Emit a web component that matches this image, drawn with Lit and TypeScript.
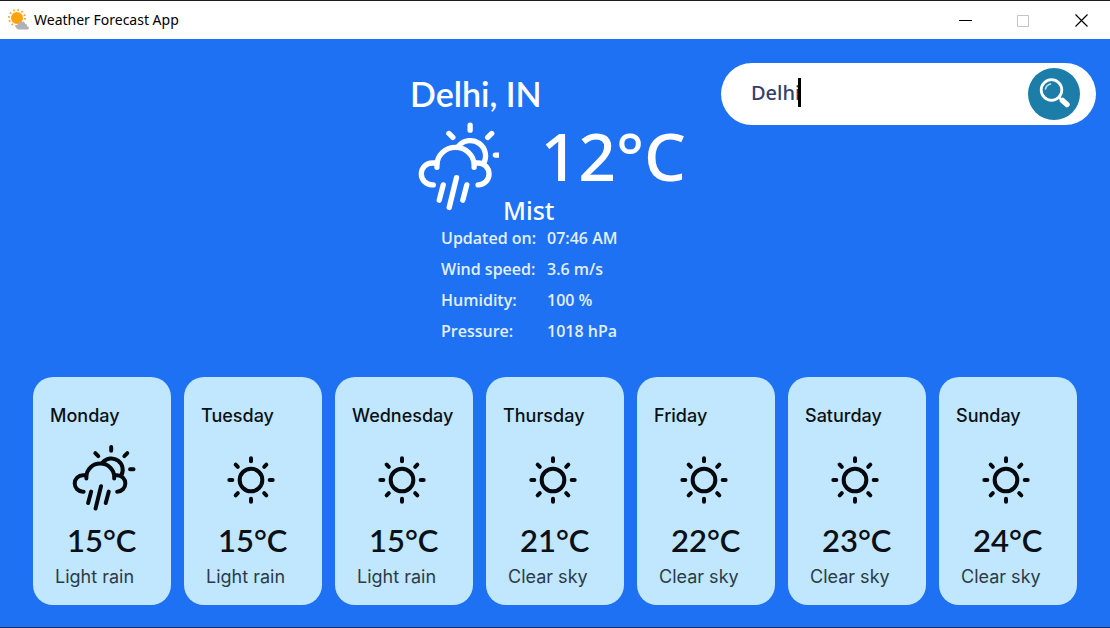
import { LitElement, html, css, svg } from "lit";
import { customElement, property } from "lit/decorators.js";

type Sky = "rain" | "clear";

interface Day {
  name: string;
  sky: Sky;
  temp: number;
  text: string;
}

const DAYS: Day[] = [
  { name: "Monday", sky: "rain", temp: 15, text: "Light rain" },
  { name: "Tuesday", sky: "clear", temp: 15, text: "Light rain" },
  { name: "Wednesday", sky: "clear", temp: 15, text: "Light rain" },
  { name: "Thursday", sky: "clear", temp: 21, text: "Clear sky" },
  { name: "Friday", sky: "clear", temp: 22, text: "Clear sky" },
  { name: "Saturday", sky: "clear", temp: 23, text: "Clear sky" },
  { name: "Sunday", sky: "clear", temp: 24, text: "Clear sky" },
];

const DETAILS = [
  ["Updated on:", "07:46 AM"],
  ["Wind speed:", "3.6 m/s"],
  ["Humidity:", "100 %"],
  ["Pressure:", "1018 hPa"],
];

const rainShape = svg`
  <g fill="none" stroke="currentColor" stroke-width="16" stroke-linecap="round" stroke-linejoin="round">
    <path d="M241 166V181M177 191L189 203M306 191L294 203M317 256H331" />
    <path d="M207 228A46 46 0 0 1 281 282" />
    <path d="M130 346H127A33 33 0 0 1 127 280H141" />
    <path d="M141 293V286A56 53 0 0 1 253 286V293" />
    <path d="M255 280H265A33 33 0 0 1 265 346" />
    <path d="M160 346L148 392M200 324L178 414M231 346L219 392" />
  </g>`;

const sunShape = svg`
  <g fill="none" stroke="currentColor" stroke-width="12" stroke-linecap="round">
    <circle cx="72" cy="72" r="34" />
    ${[0, 45, 90, 135, 180, 225, 270, 315].map(
      (a) => svg`<path d="M72 7V16" transform="rotate(${a} 72 72)" />`
    )}
  </g>`;

@customElement("day-card")
class DayCard extends LitElement {
  @property({ attribute: false }) day!: Day;

  static styles = css`
    :host {
      display: block;
      box-sizing: border-box;
      padding: 28px 0 17px;
      border-radius: 20px;
      background: #c1e7ff;
      color: #0b1016;
      font-family: Inter, "Open Sans", sans-serif;
    }
    .name {
      margin: 0;
      padding-left: 17px;
      font-size: 18px;
      line-height: 22px;
      font-weight: 500;
    }
    .icon {
      display: flex;
      align-items: center;
      justify-content: center;
      height: 96px;
      margin-top: 5px;
      padding-right: 4px;
      color: #05080c;
    }
    .rain {
      width: 64px;
      height: 67px;
      margin: 0 0 6px 8px;
    }
    .clear {
      width: 50px;
      height: 50px;
    }
    .temp {
      margin: 0;
      padding-left: 34px;
      font-family: Lato, sans-serif;
      font-size: 31px;
      line-height: 24px;
      font-weight: 600;
      white-space: nowrap;
    }
    .text {
      margin: 0;
      padding: 14px 0 0 22px;
      font-size: 18px;
      line-height: 22px;
      color: #2b3b49;
    }
  `;

  render() {
    const d = this.day;
    return html`
      <h2 class="name">${d.name}</h2>
      <div class="icon">
        ${d.sky === "rain"
          ? html`<svg class="rain" viewBox="84 154 256 270" aria-hidden="true">${rainShape}</svg>`
          : html`<svg class="clear" viewBox="-3 -3 150 150" aria-hidden="true">${sunShape}</svg>`}
      </div>
      <p class="temp">${d.temp}°C</p>
      <p class="text">${d.text}</p>
    `;
  }
}

@customElement("app-root")
class AppRoot extends LitElement {
  static styles = css`
    :host {
      display: flex;
      flex-direction: column;
      box-sizing: border-box;
      min-height: 100vh;
      border-top: 1px solid #1d1d1f;
      border-bottom: 1px solid #0c2a5c;
      background: #1e71f3;
      color: #fff;
      font-family: "Noto Sans", "Open Sans", sans-serif;
    }
    .titlebar {
      display: flex;
      align-items: center;
      height: 38px;
      padding-left: 8px;
      background: #fff;
      color: #000;
    }
    .logo {
      width: 22px;
      height: 22px;
    }
    .title {
      flex: 1;
      margin: 0 0 0 4px;
      font-size: 14px;
      line-height: 20px;
      font-weight: 400;
    }
    .win {
      display: flex;
      align-items: center;
      justify-content: center;
      width: 58px;
      height: 38px;
      padding: 0;
      border: 0;
      background: none;
      color: #000;
    }
    .win:disabled {
      color: #c4c4c4;
    }
    .win svg {
      width: 13px;
      height: 13px;
    }
    .top {
      display: flex;
      justify-content: flex-end;
      align-items: flex-start;
      gap: 35px;
      padding: 24px 14px 0;
    }
    .current {
      width: 276px;
      padding-top: 10px;
    }
    .place {
      margin: 0;
      font-family: Lato, sans-serif;
      font-size: 34px;
      line-height: 42px;
      font-weight: 600;
    }
    .now {
      display: flex;
      justify-content: space-between;
      align-items: flex-start;
      padding-left: 8px;
      height: 82px;
    }
    .now svg {
      width: 81px;
      height: 90px;
      margin-top: 6px;
    }
    .degrees {
      margin: 0;
      font-size: 66px;
      line-height: 80px;
      font-weight: 500;
    }
    .sky {
      margin: 0;
      padding-left: 93px;
      font-size: 25px;
      line-height: 26px;
      font-weight: 500;
    }
    .details {
      display: grid;
      grid-template-columns: 106px 1fr;
      margin: 0;
      padding-left: 31px;
      font-family: "Open Sans", "Noto Sans", sans-serif;
      font-size: 16px;
      line-height: 31px;
      font-weight: 600;
      color: #e2efff;
    }
    .details dt,
    .details dd {
      margin: 0;
      white-space: nowrap;
    }
    .search {
      position: relative;
      display: flex;
      align-items: center;
      box-sizing: border-box;
      width: 375px;
      height: 62px;
      padding: 0 16px 0 30px;
      border-radius: 31px;
      background: #fff;
    }
    .query {
      flex: 1;
      min-width: 0;
      padding: 0 0 2px;
      border: 0;
      outline: 0;
      background: none;
      color: #34406c;
      font: 500 20px/28px "Noto Sans", "Open Sans", sans-serif;
    }
    .caret {
      position: absolute;
      left: 77px;
      top: 15px;
      width: 3px;
      height: 29px;
      background: #000;
    }
    .go {
      width: 52px;
      height: 52px;
      padding: 0;
      border: 0;
      border-radius: 50%;
      background: #1d7da9;
      color: #fff;
    }
    .go svg {
      display: block;
      width: 52px;
      height: 52px;
    }
    .week {
      display: grid;
      grid-template-columns: repeat(7, 1fr);
      gap: 13px;
      padding: 30px 33px 22px;
    }
  `;

  render() {
    return html`
      <header class="titlebar">
        <svg class="logo" viewBox="0 0 22 22" aria-hidden="true">
          <circle cx="9" cy="9" r="8" fill="none" stroke="#f5a623" stroke-width="2" stroke-dasharray="1.6 2.6" />
          <circle cx="9" cy="9" r="6" fill="#fba30a" />
          <path
            d="M10.500 20.500a2.700 2.700 0 0 1-.5-5.300 3.800 3.800 0 0 1 7.200-.4 2.500 2.500 0 0 1 2 2.600 1.700 1.700 0 0 1 1 3.100z"
            fill="#b1b1b9"
          />
        </svg>
        <h1 class="title">Weather Forecast App</h1>
        <button class="win" aria-label="Minimize">
          <svg viewBox="0 0 13 13"><path d="M0 6.500H13" stroke="currentColor" /></svg>
        </button>
        <button class="win" aria-label="Maximize" disabled>
          <svg viewBox="0 0 13 13"><path d="M.5 1.500H11.500V12.500H.5Z" fill="none" stroke="currentColor" /></svg>
        </button>
        <button class="win" aria-label="Close">
          <svg viewBox="0 0 13 13"><path d="M.5.500L12.500 12.500M12.500.500L.5 12.500" stroke="currentColor" stroke-width="1.200" /></svg>
        </button>
      </header>
      <main>
        <div class="top">
          <section class="current">
            <h2 class="place">Delhi, IN</h2>
            <div class="now">
              <svg viewBox="84 154 244 270" aria-hidden="true">${rainShape}</svg>
              <p class="degrees">12°C</p>
            </div>
            <p class="sky">Mist</p>
            <dl class="details">
              ${DETAILS.map(([k, v]) => html`<dt>${k}</dt><dd>${v}</dd>`)}
            </dl>
          </section>
          <form class="search" @submit=${(e: Event) => e.preventDefault()}>
            <input class="query" type="text" aria-label="City" .value=${"Delhi"} />
            <span class="caret"></span>
            <button class="go" aria-label="Search">
              <svg viewBox="0 0 52 52" fill="none" stroke="currentColor" stroke-linecap="round">
                <circle cx="23.500" cy="22" r="10.300" stroke-width="2.800" />
                <path d="M17.500 21A6.500 6.500 0 0 1 22.500 16" stroke-width="1.600" opacity=".75" />
                <path d="M31 29.500L34 32.500" stroke-width="2.400" />
                <path d="M34.500 32.500L39 36.500" stroke-width="5.500" />
              </svg>
            </button>
          </form>
        </div>
        <section class="week">
          ${DAYS.map((d) => html`<day-card .day=${d}></day-card>`)}
        </section>
      </main>
    `;
  }
}
